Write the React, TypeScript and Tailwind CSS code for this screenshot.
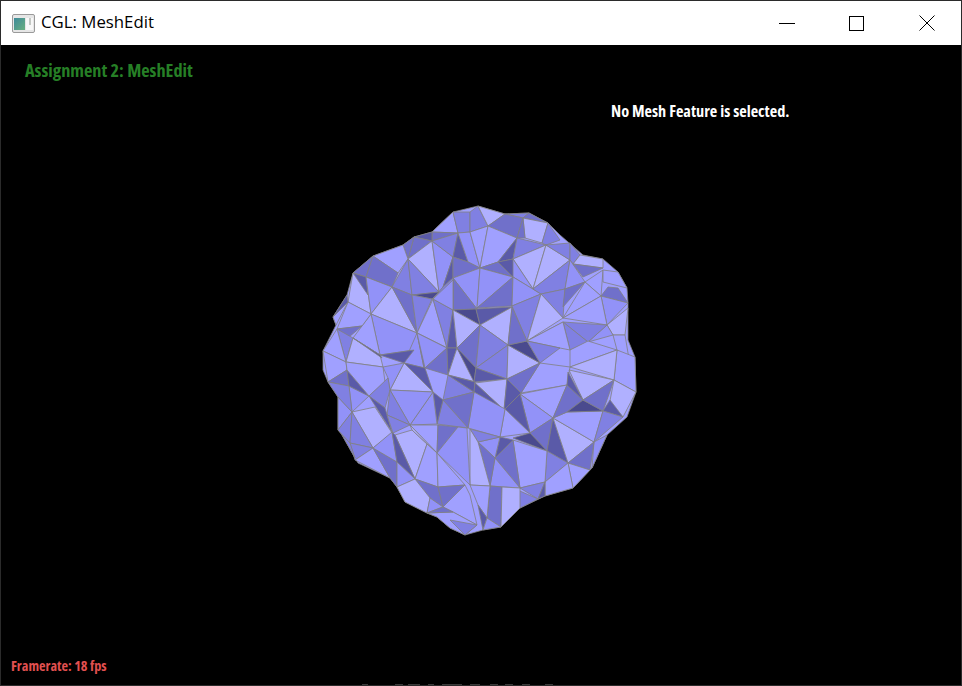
const shades: Record<string, string> = {
  a: '#b0b0ff',
  b: '#a0a0ff',
  c: '#9292f8',
  d: '#8080e2',
  e: '#7070ca',
  f: '#5a5aa8',
  g: '#4a4a8e',
};

const outline =
  '453,212 478,206 505,214 529,213 548,223 560,235 583,255 603,259 618,272 627,288 628,303 628,340 635,357 636,392 627,417 607,435 592,468 573,488 545,496 520,508 501,527 483,530 465,535 450,528 437,517 427,513 405,502 397,487 390,478 358,463 355,458 342,435 338,430 338,397 328,382 323,370 323,351 336,325 333,317 347,295 353,273 373,256 403,245 414,237 432,232';

const faces: [string, string][] = [
  ['b', '453,212 458,233 432,232'], ['d', '453,212 470,212 470,232 458,233'], ['d', '470,212 478,206 488,226 470,232'],
  ['a', '478,206 505,214 488,226'], ['d', '505,214 529,213 523,218'], ['e', '505,214 523,218 517,238 488,226'],
  ['e', '529,213 548,223 523,218'], ['a', '523,218 548,223 542,243 525,238'], ['e', '517,238 525,238 523,218'],
  ['d', '548,223 560,240 546,245 542,243'], ['e', '432,232 458,233 432,241'], ['f', '414,237 432,232 432,241'],
  ['e', '414,237 432,241 408,259'], ['e', '403,245 414,237 408,259'], ['b', '373,256 403,245 408,259 398,273'],
  ['a', '408,259 432,241 439,292'], ['c', '432,241 453,257 443,287 439,292'], ['d', '432,241 458,233 453,257'],
  ['f', '458,233 468,262 453,257'], ['f', '453,257 453,278 443,287'], ['c', '458,233 470,232 480,268 468,262'],
  ['e', '453,257 468,262 480,268 453,278'], ['c', '453,278 480,268 477,309'], ['e', '453,278 477,309 453,310'],
  ['d', '443,287 453,278 453,310 433,299'], ['b', '470,232 488,226 480,268'], ['b', '488,226 517,238 498,262 480,268'],
  ['f', '517,238 498,262 513,259'], ['d', '517,238 546,245 513,259'], ['a', '513,259 533,289 546,245'],
  ['a', '546,245 570,260 533,289'], ['d', '546,245 570,243 570,260'], ['d', '570,243 580,255 573,264 570,260'],
  ['e', '480,268 498,262 513,277'], ['f', '498,262 513,259 522,283 513,277'], ['c', '513,259 533,289 541,294 513,277'],
  ['c', '480,268 477,308 513,277'], ['e', '513,277 477,308 512,306'], ['c', '513,277 541,294 512,306'],
  ['d', '533,289 570,260 565,289 541,294'], ['c', '570,260 585,282 565,289'], ['d', '541,294 565,289 563,318'],
  ['e', '565,289 585,282 563,307'], ['a', '580,255 603,259 603,268 573,264'], ['e', '573,264 603,268 583,277'],
  ['b', '585,282 603,270 601,296'], ['b', '603,270 618,272 627,288 603,282'], ['e', '601,296 608,287 618,288 628,303'],
  ['b', '585,282 601,296 563,318'], ['c', '601,296 628,303 607,325'], ['b', '601,296 607,325 563,318'],
  ['a', '607,325 628,308 625,335 613,335'], ['c', '607,325 613,335 588,342'], ['d', '563,322 607,325 588,342'],
  ['d', '563,322 588,342 570,350'], ['b', '570,350 588,341 617,350 570,367'], ['b', '613,335 625,335 630,365 617,350'],
  ['b', '617,350 635,357 636,392 614,380'], ['a', '570,367 617,350 614,380'], ['d', '512,306 541,294 527,341'],
  ['a', '541,294 563,318 527,341'], ['a', '527,341 563,322 560,348'], ['b', '527,341 563,322 570,350 560,348'],

  ['e', '353,273 373,256 366,277'], ['e', '373,256 398,273 392,287 366,277'], ['g', '366,277 392,287 375,281'],
  ['a', '353,273 366,277 371,314 348,302'], ['f', '353,273 366,277 368,295'], ['c', '366,277 392,287 371,314'],
  ['a', '392,287 417,333 371,314'], ['d', '392,287 408,259 412,295'], ['d', '408,259 439,292 412,295'],
  ['g', '412,295 439,292 432,299'], ['e', '392,287 412,295 417,333'], ['d', '412,295 432,299 417,333'],
  ['b', '433,299 447,348 417,333'], ['d', '433,299 453,310 447,348'], ['c', '433,299 453,280 453,310'],
  ['c', '371,314 417,333 414,350 380,355'], ['b', '371,314 353,338 380,355'], ['b', '348,302 371,314 362,326 337,329'],
  ['e', '337,329 362,326 349,337'], ['d', '337,329 353,338 346,362'], ['b', '323,351 337,329 346,362'],
  ['a', '353,338 380,355 383,367 346,362'], ['g', '353,338 382,358 380,355'], ['b', '333,317 348,302 336,325'],
  ['f', '333,317 347,295 348,302'], ['c', '417,333 424,368 404,363'], ['e', '417,333 447,348 424,368'],
  ['f', '380,355 414,350 404,363'], ['b', '323,351 346,362 347,370 328,382'],

  ['f', '453,310 457,348 447,348'], ['g', '453,310 476,309 480,325'], ['a', '453,310 480,325 457,348'],
  ['f', '476,309 512,307 480,325'], ['a', '512,307 480,325 508,345'], ['e', '480,325 457,348 476,368'],
  ['d', '480,325 508,345 476,368'], ['d', '476,368 508,345 507,379'], ['a', '508,345 540,363 507,379'],
  ['g', '508,345 527,341 540,363'], ['d', '527,341 560,348 540,363'], ['e', '512,307 527,341 508,345'],
  ['b', '540,363 570,367 567,385 521,393'], ['c', '417,333 447,348 425,368'], ['e', '447,348 448,375 425,368'],
  ['f', '447,348 457,348 448,375'], ['a', '457,348 476,382 448,375'], ['g', '457,348 476,368 474,382'],
  ['f', '476,368 507,379 474,382'], ['d', '448,375 474,392 443,400'], ['f', '448,375 475,382 474,392'],
  ['a', '475,383 507,379 504,410'], ['f', '474,392 475,383 504,410'], ['f', '507,379 521,393 504,410'],
  ['e', '507,379 540,363 521,393'], ['e', '521,393 504,410 530,433'], ['b', '520,394 567,385 553,418'],
  ['c', '520,394 553,418 530,433'], ['f', '505,409 520,394 530,433'], ['b', '505,409 530,433 500,437'],
  ['c', '474,392 505,409 500,437 468,428'], ['e', '443,400 474,392 468,428'], ['d', '443,400 468,428 437,424'],
  ['f', '433,392 443,400 437,424'], ['b', '400,390 433,392 410,425'], ['c', '433,392 437,424 410,425'],
  ['f', '404,363 425,368 433,392'], ['a', '404,363 433,392 390,390'], ['c', '383,367 404,363 390,390 388,378'],

  ['e', '553,418 530,433 547,451'], ['g', '530,433 513,438 547,451'], ['f', '553,418 547,451 568,463'],
  ['a', '553,418 594,442 568,463'], ['b', '567,412 603,411 594,442 553,418'], ['e', '567,385 583,400 567,412 553,418'],
  ['g', '583,400 603,411 567,412'], ['a', '569,370 614,380 583,400'], ['f', '568,372 583,400 567,385'],
  ['e', '583,400 614,380 603,411'], ['a', '614,380 636,392 623,417 608,411'], ['f', '603,411 623,417 610,400'],
  ['d', '603,411 623,417 594,442'], ['c', '594,442 607,435 592,468'], ['e', '594,442 590,470 568,463'],
  ['b', '568,463 590,470 573,488'], ['d', '547,451 568,463 545,482'], ['b', '545,482 568,463 573,488 545,496'],
  ['b', '513,440 547,451 545,482 520,488'], ['d', '520,488 545,482 538,499'], ['f', '545,482 545,496 538,499'],
  ['d', '513,488 538,499 520,508'], ['e', '513,440 495,458 520,488'], ['c', '495,458 520,488 490,486'],
  ['f', '500,437 513,440 495,458'], ['c', '478,442 500,437 495,458'], ['e', '478,442 495,458 490,486'],
  ['d', '470,429 500,437 478,442'], ['a', '470,429 478,442 490,486 470,485'], ['e', '490,486 502,487 501,527 487,518'],
  ['f', '490,486 487,518 482,500'], ['a', '502,487 520,488 520,508 501,527'], ['b', '470,485 490,486 487,518 478,505'],
  ['f', '478,505 487,518 483,530'], ['c', '487,518 501,527 483,530'],

  ['e', '328,382 347,370 349,386'], ['c', '349,386 369,396 352,412'], ['f', '347,370 369,396 349,386'],
  ['b', '346,362 383,367 385,382 369,396 347,370'], ['d', '369,396 388,378 390,390 385,408'], ['c', '390,390 433,392 410,425'],
  ['d', '390,390 410,425 387,415'], ['f', '369,396 385,408 392,432'], ['a', '352,412 375,407 392,433 373,448'],
  ['c', '338,397 352,412 338,430'], ['d', '328,382 349,386 352,412 338,397'], ['d', '338,430 352,412 350,443'],
  ['d', '352,412 373,448 350,443'], ['d', '350,443 373,448 355,460'], ['d', '342,435 350,443 355,458'],
  ['b', '355,460 373,448 390,478'], ['e', '373,448 397,462 397,487 390,478'], ['c', '373,448 392,432 397,462'],
  ['a', '395,435 412,430 427,444 415,479'], ['f', '392,432 395,435 415,479 397,462'], ['c', '397,462 415,479 397,487'],
  ['d', '387,415 410,425 393,433'], ['b', '410,425 438,425 437,453'], ['a', '410,425 437,453 427,444 412,430'],
  ['e', '438,425 458,427 437,453'], ['b', '427,444 437,453 438,487 415,479'], ['b', '437,453 465,485 438,487'],
  ['c', '458,427 467,428 470,485 437,453'], ['e', '415,479 438,487 443,507 430,498'], ['e', '438,487 465,485 443,507'],
  ['a', '397,487 415,479 430,498 427,513 405,502'], ['c', '430,498 443,507 427,513'], ['b', '443,507 465,485 470,495 477,525 453,512'],
  ['b', '427,513 453,512 477,525 465,535 450,528 437,517'], ['e', '427,513 453,512 443,507'], ['d', '450,520 477,525 465,535'],
];

const App = () => {
  return (
    <div className="w-[962px] h-[686px] flex flex-col bg-black border border-[#2b2b2b] overflow-hidden">
      <div className="h-[44px] shrink-0 bg-white flex items-center justify-between pl-[11px]">
        <div className="flex items-center gap-[6px]">
          <svg width="23" height="19" viewBox="0 0 23 19">
            <defs>
              <linearGradient id="tile" x1="0" y1="0" x2="1" y2="1">
                <stop offset="0" stopColor="#3d8a9a" />
                <stop offset="1" stopColor="#6ab080" />
              </linearGradient>
            </defs>
            <rect x="0.5" y="0.5" width="22" height="18" rx="1.5" fill="#e6e6e6" stroke="#9a9a9a" />
            <rect x="2" y="4" width="11" height="12" fill="url(#tile)" />
            <rect x="14" y="4" width="7" height="12" fill="#f8f8f8" />
            <rect x="17" y="4" width="2" height="7" fill="#c4c8c4" />
          </svg>
          <span className="font-['Open_Sans',sans-serif] text-[16.8px] text-black leading-none -mt-[2px]">CGL: MeshEdit</span>
        </div>
        <div className="flex items-center mr-[11px]">
          <div className="w-[46px] flex justify-center -ml-[1px]">
            <span className="block w-[16px] h-px bg-black" />
          </div>
          <div className="w-[46px] ml-[23px] flex justify-center">
            <span className="block w-[15px] h-[15px] border border-black" />
          </div>
          <div className="w-[46px] ml-[25px] flex justify-center">
            <svg width="16" height="16" viewBox="0 0 16 16" stroke="#000" fill="none">
              <path d="M0.5 0.5 15.5 15.5M15.5 0.5 0.5 15.5" />
            </svg>
          </div>
        </div>
      </div>
      <div className="relative flex-1 bg-black font-['Open_Sans',sans-serif] font-bold">
        <svg className="absolute inset-0" width="960" height="640" viewBox="1 45 960 640">
          <polygon points={outline} fill={shades.b} stroke="#808080" strokeWidth="0.8" />
          {faces.map(([shade, points], i) => (
            <polygon key={i} points={points} fill={shades[shade]} stroke="#808080" strokeWidth="0.8" strokeLinejoin="round" />
          ))}
          <path d="M362 684.5h6M395 684.5h8M408 684.5h12M428 684.5h6M442 684.5h20M470 684.5h10M490 684.5h8M505 684.5h8M522 684.5h8M545 684.5h8" stroke="#3a3a3a" strokeWidth="1" />
        </svg>
        <p className="absolute left-[24px] top-[14px] text-[18.3px] leading-[22px] text-[#267f26] [font-stretch:75%]">
          Assignment 2: MeshEdit
        </p>
        <p className="absolute left-[610px] top-[56px] text-[16.3px] leading-[20px] text-white [font-stretch:75%]">
          No Mesh Feature is selected.
        </p>
        <p className="absolute left-[10px] top-[612px] text-[14.2px] leading-[18px] text-[#e25050] [font-stretch:75%]">
          Framerate: 18 fps
        </p>
      </div>
    </div>
  );
};

export default App;
